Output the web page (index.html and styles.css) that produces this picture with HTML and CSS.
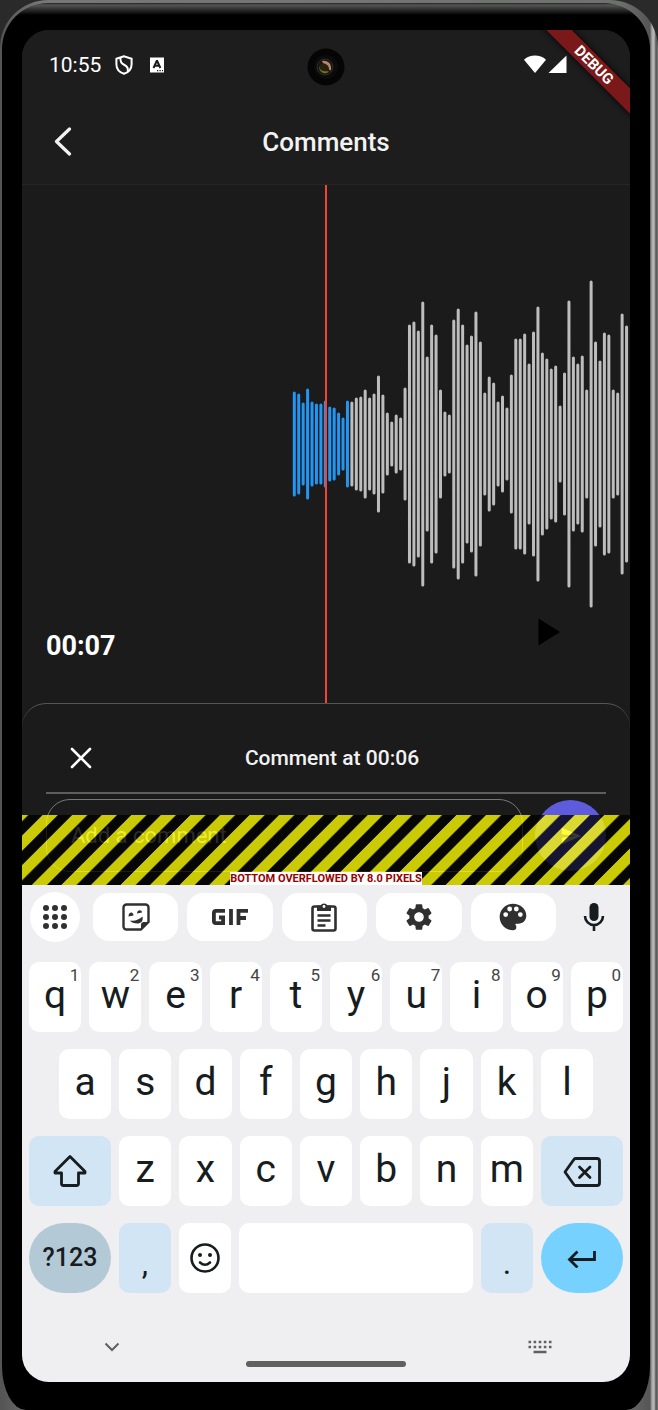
FILE: index.html
```html
<!DOCTYPE html>
<html lang="en">
<head>
<meta charset="utf-8">
<meta name="viewport" content="width=device-width, initial-scale=1">
<title>Comments</title>
<link rel="stylesheet" href="styles.css">
</head>
<body>
<div class="device">
<div class="bezel">
<main class="screen">
  <div class="status">
    <span class="clock">10:55</span>
    <svg class="shield" width="18" height="20" viewBox="0 0 18 20" fill="none" stroke="#fff" stroke-width="2"><path d="M9 1.200 1.400 3.800v5.400c0 4.400 3 8 7.600 9.600 4.600-1.600 7.600-5.200 7.600-9.600V3.800z"/><path d="M5.500 2.800c-.5 3.600.7 5.600 4 7.200 2.800 1.500 4 3.500 3.200 6.600"/></svg>
    <svg class="badge" width="14" height="16" viewBox="0 0 14 16"><path fill="#fff" d="M0 .5h14v15H0z"/><path fill="none" stroke="#1b1b1b" stroke-width="2" d="M3.500 11 6.700 4h.5l3.200 7M4.700 8.700h4.600"/><path stroke="#1b1b1b" stroke-width="1.300" stroke-dasharray="1.300 1.200" d="M7 13.600h6"/></svg>
    <svg class="signal" width="43" height="20" viewBox="0 0 43 20" fill="#fff"><path d="M0 4.800C6-.8 16-.8 22 4.800L11 18z"/><path d="M42.500.5V18H24.500z"/></svg>
    <svg class="camera" width="38" height="38" viewBox="0 0 38 38"><circle cx="19" cy="19" r="18.500" fill="#050505"/><circle cx="19" cy="19" r="12" fill="#0b0b0b"/><circle cx="18" cy="19" r="8" fill="#171512" stroke="#2c2c2c"/><circle cx="17" cy="20" r="5" fill="#25230d"/><path d="M15 13c6-1 10 3 9 9-1 1-2 0-2-1 0-3-2-5-6-6z" fill="#b9826a"/><path d="M12 18c1 5 5 6 10 5-2 4-10 3-10-5z" fill="#75711c"/></svg>
  </div>
  <header class="header">
    <button class="icon-btn" aria-label="Back"><svg width="18" height="30" viewBox="0 0 18 30" fill="none" stroke="#f2f2f2" stroke-width="3.200" stroke-linecap="round" stroke-linejoin="round"><path d="M15.500 2 2.500 14.500 15.500 27"/></svg></button>
    <h1 class="title">Comments</h1>
  </header>
  <section class="player">
    <svg class="wave" viewBox="0 0 608 518" preserveAspectRatio="xMidYMid slice" stroke-width="3" stroke-linecap="round">
      <path id="played" stroke="#2196f3"/><path id="rest" stroke="#bdbdbd"/>
      <path d="M304 0v518" stroke="#f44336" stroke-width="2" stroke-linecap="butt"/>
    </svg>
    <span class="time">00:07</span>
    <button class="play" aria-label="Play"><svg width="22" height="28" viewBox="0 0 22 28"><path d="M.5.500 22 14 .5 27.500z"/></svg></button>
  </section>
  <section class="sheet">
    <div class="sheet-head">
      <button class="icon-btn" aria-label="Close"><svg width="22" height="22" viewBox="0 0 22 22" stroke="#fff" stroke-width="2.600" stroke-linecap="round"><path d="m2 2 18 18M20 2 2 20"/></svg></button>
      <h2 class="sheet-title">Comment at 00:06</h2>
    </div>
    <form class="composer">
      <input class="field" type="text" placeholder="Add a comment" aria-label="Add a comment">
      <button class="send" type="button" aria-label="Send"><svg width="22" height="22" viewBox="0 0 24 24" fill="#fff"><path d="M2.010 21 23 12 2.010 3 2 10l15 2-15 2z"/></svg></button>
    </form>
    <div class="overflow">
      <svg class="stripes" aria-hidden="true"><defs><pattern id="tape" width="29.560" height="70" patternUnits="userSpaceOnUse" patternTransform="skewX(-45)"><path fill="#ff0" d="M0 0h29.560v70H0z"/><path d="M6.300 0h14.300v70H6.300z"/></pattern></defs><rect width="100%" height="100%" fill="url(#tape)" fill-opacity=".77"/></svg>
      <span class="overflow-text">BOTTOM OVERFLOWED BY 8.0 PIXELS</span>
    </div>
  </section>
  <section class="keyboard">
    <div class="tools">
      <button class="tool round" aria-label="Menu"><svg width="24" height="24" viewBox="0 0 24 24" fill="#303030"><circle cx="3" cy="3" r="3"/><circle cx="12" cy="3" r="3"/><circle cx="21" cy="3" r="3"/><circle cx="3" cy="12" r="3"/><circle cx="12" cy="12" r="3"/><circle cx="21" cy="12" r="3"/><circle cx="3" cy="21" r="3"/><circle cx="12" cy="21" r="3"/><circle cx="21" cy="21" r="3"/></svg></button>
      <button class="tool" aria-label="Stickers"><svg width="28" height="28" viewBox="0 0 28 28"><path fill="none" stroke="#303030" stroke-width="2.400" stroke-linejoin="round" d="M4.500 1.500h19a3 3 0 0 1 3 3V19l-7.500 7.500H4.500a3 3 0 0 1-3-3v-19a3 3 0 0 1 3-3z"/><path fill="#303030" d="M19 27v-5a3 3 0 0 1 3-3h5zM8 17.500c5 .8 9-.8 12.500-4 1 5-2 7-5 7-3.500 0-6-.8-7.500-3zM6.500 13.500c0-5 5-5 5-1zM15 10.500c0-4 5-4 5-1z"/></svg></button>
      <button class="tool" aria-label="GIF"><svg width="36" height="16" viewBox="0 0 36 16" fill="none" stroke="#303030" stroke-width="3.800"><path d="M13 1.900H3.900Q1.900 1.900 1.900 3.900v8.200q0 2 2 2h7.200V8.500H7M19 0v16M26.500 16V1.900H36M26.500 9H34"/></svg></button>
      <button class="tool" aria-label="Clipboard"><svg width="26" height="30" viewBox="0 0 26 30" fill="none" stroke="#303030" stroke-width="2.600"><rect x="1.500" y="4.500" width="23" height="24" rx="2"/><path fill="#303030" stroke="none" d="M6 3.500h3.500a4 4 0 0 1 7 0H20V9H6z"/><circle cx="13" cy="4.500" r="1.400" fill="#fff" stroke="none"/><path d="M6.500 13.500h13M6.500 18.500h13M6.500 23.500h8"/></svg></button>
      <button class="tool" aria-label="Settings"><svg width="32" height="32" viewBox="0 0 24 24" fill="#303030"><path d="M19.140 12.940c.04-.3.060-.61.060-.94s-.02-.64-.07-.94l2.030-1.580a.49.490 0 0 0 .12-.61l-1.920-3.320a.488.488 0 0 0-.59-.22l-2.390.96c-.5-.38-1.030-.7-1.620-.94l-.36-2.540a.484.484 0 0 0-.48-.41h-3.840c-.24 0-.43.170-.47.410l-.36 2.540c-.59.240-1.130.570-1.620.940l-2.390-.96c-.22-.08-.47 0-.59.220L2.740 8.870c-.12.210-.08.470.12.610l2.030 1.580c-.05.300-.09.630-.09.940s.02.640.07.940l-2.030 1.580a.49.490 0 0 0-.12.610l1.920 3.320c.12.220.37.290.59.220l2.390-.96c.5.380 1.030.7 1.620.940l.36 2.540c.05.240.24.410.48.410h3.840c.24 0 .44-.17.47-.41l.36-2.540c.59-.24 1.130-.56 1.620-.94l2.390.96c.22.080.47 0 .59-.22l1.920-3.320c.12-.22.070-.47-.12-.61zM12 15.600A3.610 3.610 0 0 1 8.400 12c0-1.980 1.620-3.600 3.600-3.600s3.600 1.620 3.600 3.600-1.620 3.600-3.600 3.600z"/></svg></button>
      <button class="tool" aria-label="Theme"><svg width="32" height="32" viewBox="0 0 24 24" fill="#303030"><path d="M12 2C6.490 2 2 6.490 2 12s4.490 10 10 10a2.500 2.500 0 0 0 2.500-2.500c0-.61-.23-1.200-.64-1.670a.528.528 0 0 1-.13-.33c0-.28.220-.5.500-.5H16c3.310 0 6-2.690 6-6 0-4.960-4.490-9-10-9zm-5.500 10a1.800 1.800 0 1 1 0-3.600 1.800 1.800 0 0 1 0 3.600zm3-4.200a1.800 1.800 0 1 1 0-3.600 1.800 1.800 0 0 1 0 3.600zm5 0a1.800 1.800 0 1 1 0-3.600 1.800 1.800 0 0 1 0 3.600zm3 4.200a1.800 1.800 0 1 1 0-3.600 1.800 1.800 0 0 1 0 3.600z"/></svg></button>
      <button class="tool mic" aria-label="Voice input"><svg width="22" height="30" viewBox="0 0 22 30"><rect x="6.500" y="1" width="9" height="18" rx="4.500" fill="#171c1f"/><path fill="none" stroke="#171c1f" stroke-width="2.600" d="M2 14a9 9 0 0 0 18 0M11 23v6"/></svg></button>
    </div>
    <div class="keys">
      <div class="row">
        <button class="key">q<span class="hint">1</span></button><button class="key">w<span class="hint">2</span></button><button class="key">e<span class="hint">3</span></button><button class="key">r<span class="hint">4</span></button><button class="key">t<span class="hint">5</span></button><button class="key">y<span class="hint">6</span></button><button class="key">u<span class="hint">7</span></button><button class="key">i<span class="hint">8</span></button><button class="key">o<span class="hint">9</span></button><button class="key">p<span class="hint">0</span></button>
      </div>
      <div class="row inset">
        <button class="key">a</button><button class="key">s</button><button class="key">d</button><button class="key">f</button><button class="key">g</button><button class="key">h</button><button class="key">j</button><button class="key">k</button><button class="key">l</button>
      </div>
      <div class="row edges">
        <button class="key soft" aria-label="Shift"><svg width="36" height="34" viewBox="0 0 36 34" fill="none" stroke="#171c1f" stroke-width="2.800" stroke-linejoin="round"><path d="M18 2.500 33 17.500v1.500h-6.500v10.500q0 2-2 2h-13q-2 0-2-2V19H3v-1.500z"/></svg></button><button class="key">z</button><button class="key">x</button><button class="key">c</button><button class="key">v</button><button class="key">b</button><button class="key">n</button><button class="key">m</button><button class="key soft" aria-label="Backspace"><svg width="38" height="32" viewBox="0 -2 38 32" fill="none" stroke="#171c1f" stroke-width="2.800" stroke-linejoin="round"><path d="M12.500 1.500H34q2.500 0 2.500 2.500v22q0 2.500-2.500 2.500H12.500q-1 0-2-1.500L2 15l8.500-12q1-1.500 2-1.500z"/><path stroke-linecap="round" d="m16.500 10 10.500 10.500M27 10 16.500 20.500"/></svg></button>
      </div>
      <div class="row bottom">
        <button class="key pill">?123</button><button class="key soft low">,</button><button class="key" aria-label="Emoji"><svg width="30" height="30" viewBox="0 0 30 30" fill="none" stroke="#171c1f" stroke-width="2.600"><circle cx="15" cy="15" r="13.500"/><path stroke-linecap="round" d="M10 19.500q5 4.500 10 0"/><circle cx="10" cy="12" r="2" fill="#171c1f" stroke="none"/><circle cx="20" cy="12" r="2" fill="#171c1f" stroke="none"/></svg></button><button class="key" aria-label="Space"></button><button class="key soft low">.</button><button class="key enter" aria-label="Enter"><svg width="30" height="20" viewBox="0 0 30 20" fill="none" stroke="#171c1f" stroke-width="2.800"><path d="M27.500 3v8.500H3M10.500 3.500 2.500 11.500l8 8"/></svg></button>
      </div>
    </div>
    <div class="nav">
      <button class="icon-btn nav-btn" aria-label="Hide keyboard"><svg width="16" height="10" viewBox="0 0 16 10" fill="none" stroke="#606060" stroke-width="2"><path d="m1.500 1.500 6.500 6.500 6.500-6.500"/></svg></button>
      <span class="handle"></span>
      <button class="icon-btn nav-btn" aria-label="Switch keyboard"><svg width="24" height="14" viewBox="0 0 24 14" stroke="#606060"><path stroke-width="2.600" stroke-dasharray="2.600 2.500" d="M.5 2h23M.5 7h23"/><path stroke-width="2.400" d="M5.500 12h13"/></svg></button>
    </div>
  </section>
  <div class="debug">DEBUG</div>
</main>
</div>
</div>
<script src="wave.js"></script>
</body>
</html>
```
FILE: styles.css
```css
* { box-sizing: border-box; }
body {
  margin: 0;
  background: #2a2a2a;
  font-family: Roboto, "Liberation Sans", sans-serif;
  color: #f2f2f2;
}
button {
  border: 0;
  padding: 0;
  background: none;
  color: inherit;
  font: inherit;
  cursor: pointer;
}
svg { display: block; }
h1, h2 { margin: 0; font-weight: 500; }

.device {
  padding: 3px 8px 0 2px;
  border-radius: 48px 48px 0 0;
  background: linear-gradient(90deg, #555 0 2px, #777 40px, #6f716f calc(100% - 40px), #555 calc(100% - 8px), #aaa calc(100% - 6px), #bbb calc(100% - 4px), #555 calc(100% - 2px), #777 100%);
}
.bezel {
  padding: 27px 20px 28px;
  border-radius: 46px 46px 24px 24px / 46px 46px 44px 44px;
  background: linear-gradient(#222 0, #555 2px, #000 12px);
}
.screen {
  position: relative;
  overflow: hidden;
  border-radius: 27px;
  background: #1b1b1b;
}

.status {
  position: relative;
  display: flex;
  align-items: center;
  height: 69px;
  padding: 0 63px 0 27px;
  background: #1d1d1d;
}
.clock { font-size: 21px; line-height: 26px; color: #fff; }
.shield { margin-left: 14px; }
.badge { margin-left: 17px; }
.signal { margin-left: auto; }
.camera {
  position: absolute;
  left: calc(50% - 19px);
  top: 18px;
}

.header {
  display: grid;
  grid-template-columns: 36px 1fr 36px;
  align-items: center;
  height: 86px;
  padding: 0 23px;
  border-bottom: 1px solid #252525;
  background: #1d1d1d;
}
.icon-btn { display: grid; place-items: center; height: 36px; }
.title { text-align: center; font-size: 26px; line-height: 32px; }

.player {
  position: relative;
  display: flex;
  align-items: flex-end;
  justify-content: space-between;
  height: 518px;
  padding: 0 70px 41px 24px;
}
.wave { position: absolute; inset: 0; width: 100%; height: 100%; }
.time { position: relative; font-size: 27px; line-height: 32px; font-weight: 700; color: #fff; }
.play { position: relative; padding-bottom: 16px; }

.sheet {
  position: relative;
  padding: 19px 24px 13px;
  border-top: 1px solid #555;
  border-radius: 24px 24px 0 0;
}
.sheet-head {
  display: grid;
  grid-template-columns: 70px 1fr 58px;
  align-items: center;
  height: 71px;
  border-bottom: 2px solid #5e5e5e;
}
.sheet-title { text-align: center; font-size: 21px; line-height: 26px; }
.composer { display: flex; gap: 12px; padding-top: 5px; }
.field {
  flex: 1;
  min-width: 0;
  height: 73px;
  padding: 0 24px;
  border: 1px solid #777;
  border-radius: 24px;
  background: transparent;
  color: #fff;
  font: 22px/28px Roboto, "Liberation Sans", sans-serif;
}
.field::placeholder { color: #bbb; opacity: 1; }
.send {
  display: grid;
  place-items: center;
  width: 71px;
  height: 71px;
  margin-top: 1px;
  border-radius: 50%;
  background: #5e5cdd;
}
.overflow {
  position: absolute;
  left: 0;
  right: 0;
  bottom: 0;
  display: flex;
  justify-content: center;
  align-items: flex-end;
  height: 70px;
}
.stripes { position: absolute; inset: 0; width: 100%; height: 100%; }
.overflow-text {
  position: relative;
  background: #fff;
  color: #900;
  font-size: 11px;
  line-height: 13px;
  font-weight: 700;
}

.keyboard { padding: 7px 7px 0; background: #efeff1; color: #171c1f; }
.tools {
  display: grid;
  grid-template-columns: 54px repeat(5, 1fr) 58px;
  align-items: center;
  gap: 9px;
  padding-left: 1px;
}
.tool {
  display: grid;
  place-items: center;
  height: 48px;
  border-radius: 16px;
  background: #fff;
}
.round { width: 50px; height: 50px; border-radius: 50%; }
.mic { background: none; }
.keys { display: grid; gap: 17px; padding-top: 20px; }
.row { display: grid; grid-template-columns: repeat(10, 1fr); gap: 8px; }
.inset { grid-template-columns: repeat(9, 1fr); padding: 0 30px; }
.edges { grid-template-columns: 82px repeat(7, 1fr) 82px; }
.bottom { grid-template-columns: 82px 52px 52px 1fr 52px 82px; }
.key {
  position: relative;
  display: grid;
  place-items: center;
  height: 70px;
  padding-bottom: 5px;
  border-radius: 10px;
  background: #fff;
  font-size: 39px;
  line-height: 48px;
}
.key:has(svg) { padding-bottom: 0; }
.hint {
  position: absolute;
  top: 4px;
  right: 2px;
  font-size: 17px;
  line-height: 18px;
  color: #444;
}
.soft { background: #d2e5f4; }
.low { padding: 10px 0 0; font-size: 32px; }
.pill {
  padding: 0;
  border-radius: 35px;
  background: #b4c9d6;
  font-size: 25px;
  font-weight: 500;
}
.enter { border-radius: 35px; background: #76d1ff; }
.nav {
  display: grid;
  grid-template-columns: 1fr 160px 1fr;
  align-items: start;
  height: 89px;
  padding-top: 36px;
}
.nav-btn { margin: 0 auto; padding: 0 30px; }
.nav-btn:first-child { margin-left: 45px; }
.nav-btn:last-child { margin-right: 41px; }
.handle { height: 6px; margin-top: 32px; border-radius: 3px; background: #606060; }

.debug {
  position: absolute;
  top: 26px;
  right: -34px;
  width: 140px;
  height: 18px;
  transform: rotate(45deg);
  background: #7a181a;
  box-shadow: 0 0 6px #000;
  color: #fff;
  font-size: 15px;
  line-height: 18px;
  font-weight: 700;
  text-align: center;
}
```
FILE: wave.js
```js
// Half-height of every bar, from the start of the recording.
const played = [52,50,41,55,42,40,40,43,37,36,31,26,43];
const rest = [42,46,47,54,46,50,68,49,31,22,29,26,56,119,122,113,142,87,119,109,54,32,29,
  124,135,119,99,108,132,102,51,67,61,42,48,36,69,105,105,110,80,112,137,91,85,75,78,38,
  71,143,87,80,88,54,163,102,83,111,109,54,51,130,118];
const START = 272.3, STEP = 4.43, MIDDLE = 259;

function bars(levels, offset) {
  return levels.map((level, i) => {
    const half = level - 1;
    return `M${(START + (i + offset) * STEP).toFixed(2)} ${MIDDLE - half}v${half * 2}`;
  }).join("");
}

document.getElementById("played").setAttribute("d", bars(played, 0));
document.getElementById("rest").setAttribute("d", bars(rest, played.length));
```
